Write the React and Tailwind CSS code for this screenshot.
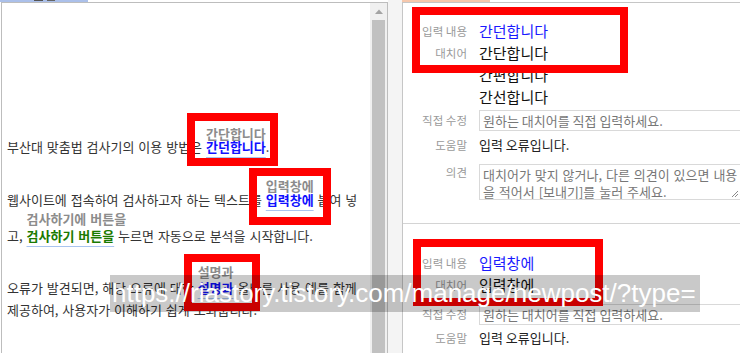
import clsx from "clsx";

const redBoxes = [
  "left-[187px] top-[113px] w-[91px] h-[53px]",
  "left-[249px] top-[168px] w-[82px] h-[57px]",
  "left-[184px] top-[254px] w-[76px] h-[57px]",
  "left-[412px] top-[7px] w-[216px] h-[66px]",
  "left-[413px] top-[239px] w-[190px] h-[67px]",
];

// word in the sentence with its suggestion shown above it
function Marked({ word, hint, hintTop, color }) {
  return (
    <span className="relative inline-block leading-[22px]">
      <span
        className={clsx(
          "absolute left-0 whitespace-nowrap leading-[16px] font-semibold text-[#8c8c8c]",
          hintTop
        )}
      >
        {hint}
      </span>
      <span
        className={clsx(
          "font-semibold underline decoration-[#a9c4ef] underline-offset-[5px]",
          color
        )}
      >
        {word}
      </span>
    </span>
  );
}

function Row({ label, className, labelClass, children }) {
  return (
    <div className={clsx("flex", className)}>
      <div
        className={clsx(
          "w-[64px] shrink-0 text-right text-[11.5px] text-[#9a9a9a] whitespace-nowrap",
          labelClass
        )}
      >
        {label}
      </div>
      <div className="ml-3 flex-1 min-w-0">{children}</div>
    </div>
  );
}

function FakeInput({ text }) {
  return (
    <div className="h-[21px] w-[270px] border border-[#d9d9d9] px-[3px] text-[13px] leading-[19px] text-[#777] whitespace-nowrap">
      {text}
    </div>
  );
}

function Candidate({ children, className }) {
  return <div className={clsx("text-[15px] leading-[22px] whitespace-nowrap", className)}>{children}</div>;
}

export default function App() {
  return (
    <div className="relative w-[740px] h-[353px] overflow-hidden bg-white flex font-['Noto_Sans_CJK_KR',sans-serif] text-[#333]">
      {/* editor panel */}
      <div className="w-[388px] shrink-0 flex flex-col">
        <div className="relative h-[2px]">
          <div className="absolute left-0 top-0 w-[88px] h-[2px] bg-[#abc0ea]" />
          <div className="absolute left-[34px] top-0 w-[9px] h-[1px] bg-[#555]" />
          <div className="absolute left-[47px] top-0 w-[8px] h-[1px] bg-[#666]" />
        </div>
        <div className="ml-[1px] flex-1 flex border-l border-t border-r border-[#bdbdbd]">
          <div className="flex-1 min-w-0 overflow-hidden pl-[5px] text-[13px] [word-spacing:1px] whitespace-nowrap">
            <div className="mt-[133px] leading-[22px]">
              부산대 맞춤법 검사기의 이용 방법은{" "}
              <Marked word="간던합니다" hint="간단합니다" hintTop="top-[-10px]" color="text-[#1010ff]" />.
            </div>
            <div className="mt-[31px] leading-[22px]">
              웹사이트에 접속하여 검사하고자 하는 텍스트를{" "}
              <Marked word="입력창에" hint="입력창에" hintTop="top-[-11px]" color="text-[#1010ff]" /> 붙여 넣
            </div>
            <div className="mt-[14px] leading-[22px]">
              고,{" "}
              <Marked word="검사하기 버튼을" hint="검사하기에 버튼을" hintTop="top-[-14px]" color="text-[#1a7a00]" />{" "}
              누르면 자동으로 분석을 시작합니다.
            </div>
            <div className="mt-[30px] leading-[22px]">
              오류가 발견되면, 해당 오류에 대한{" "}
              <Marked word="설명과" hint="설명과" hintTop="top-[-13px]" color="text-[#1010ff]" /> 올바른 사용 예를 함께
            </div>
            <div className="leading-[22px]">제공하여, 사용자가 이해하기 쉽게 도와줍니다.</div>
          </div>
          <div className="w-[17px] shrink-0 flex flex-col bg-[#f0f0f0]">
            <div className="h-[17px] flex items-center justify-center">
              <svg width="8" height="5" viewBox="0 0 8 5">
                <path d="M0 5 L4 0.5 L8 5 Z" fill="#a3a3a3" />
              </svg>
            </div>
            <div className="mx-[2px] flex-1 bg-[#c1c1c1]" />
          </div>
        </div>
      </div>

      <div className="w-[14px] shrink-0 bg-[#f4f4f4]" />

      {/* result panel */}
      <div className="flex-1 min-w-0 flex flex-col">
        <div className="relative h-[2px]">
          <div className="absolute left-0 top-0 w-[88px] h-[2px] bg-[#f6c8ad]" />
        </div>
        <div className="flex-1 border-l border-t border-[#c6c6c6] pt-[17px]">
          <Row label="입력 내용" labelClass="leading-[22px]">
            <Candidate className="text-[#1a1aff]">간던합니다</Candidate>
          </Row>
          <Row label="대치어" labelClass="leading-[22px]">
            <Candidate className="text-[#111]">간단합니다</Candidate>
          </Row>
          <Row label="" labelClass="leading-[22px]">
            <Candidate className="text-[#111]">간편합니다</Candidate>
          </Row>
          <Row label="" labelClass="leading-[22px]">
            <Candidate className="text-[#111]">간선합니다</Candidate>
          </Row>
          <Row label="직접 수정" className="mt-[2px]" labelClass="leading-[21px]">
            <FakeInput text="원하는 대치어를 직접 입력하세요." />
          </Row>
          <Row label="도움말" className="mt-[3px]" labelClass="leading-[22px]">
            <div className="text-[13px] leading-[22px] text-[#222]">입력 오류입니다.</div>
          </Row>
          <Row label="의견" className="mt-[8px]" labelClass="leading-[17px]">
            <div className="relative h-[36px] w-[262px] border border-[#d9d9d9] px-[3px] pt-[1px] text-[13px] leading-[17px] text-[#777] whitespace-nowrap [word-spacing:1px]">
              <div>대치어가 맞지 않거나, 다른 의견이 있으면 내용</div>
              <div>을 적어서 [보내기]를 눌러 주세요.</div>
              <svg className="absolute right-[2px] bottom-[2px]" width="7" height="7" viewBox="0 0 7 7">
                <path d="M7 1 L1 7 M7 4 L4 7" stroke="#8a8a8a" strokeWidth="1" />
              </svg>
            </div>
          </Row>
          <div className="mt-[23px] border-t border-[#d4d4d4]" />
          <Row label="입력 내용" className="mt-[28px]" labelClass="leading-[22px]">
            <Candidate className="text-[#1a1aff]">입력창에</Candidate>
          </Row>
          <Row label="대치어" labelClass="leading-[22px]">
            <Candidate className="text-[#111]">입력창에</Candidate>
          </Row>
          <Row label="직접 수정" className="mt-[8px]" labelClass="leading-[21px]">
            <FakeInput text="원하는 대치어를 직접 입력하세요." />
          </Row>
          <Row label="도움말" className="mt-[2px]" labelClass="leading-[22px]">
            <div className="text-[13px] leading-[22px] text-[#222]">입력 오류입니다.</div>
          </Row>
        </div>
      </div>

      {/* highlight boxes drawn over the capture */}
      {redBoxes.map((pos) => (
        <div key={pos} className={clsx("absolute border-[8px] border-[#ff0000]", pos)} />
      ))}

      {/* address tooltip over everything */}
      <div className="absolute left-[110px] top-[275px] w-[590px] h-[37px] bg-[rgba(0,0,0,0.21)] pl-[2px] font-['Liberation_Sans',sans-serif] text-[26px] leading-[37px] text-white whitespace-nowrap overflow-hidden">
        https://riastory.tistory.com/manage/newpost/?type=
      </div>
    </div>
  );
}
